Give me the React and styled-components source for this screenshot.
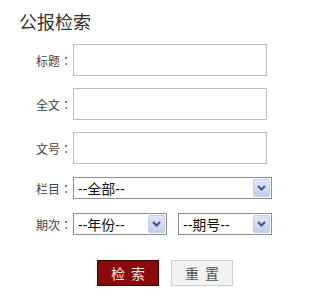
import React from "react";
import styled, { createGlobalStyle } from "styled-components";

const GlobalStyle = createGlobalStyle`
  body {
    margin: 0;
    background: #fff;
    font-family: "Liberation Sans", "Noto Sans CJK SC", sans-serif;
  }
`;

const Page = styled.div`
  width: 313px;
  height: 304px;
  padding: 12px 0 0 19px;
  box-sizing: border-box;
`;

const Title = styled.h2`
  margin: 0 0 10px 0;
  font-size: 18px;
  font-weight: normal;
  line-height: 22px;
  color: #333;
`;

const Form = styled.div`
  display: flex;
  flex-direction: column;
`;

const Row = styled.div`
  display: flex;
  align-items: center;
  margin-bottom: ${(props) => props.gap || 12}px;
`;

const Label = styled.span`
  width: 53px;
  text-align: right;
  font-size: 12px;
  font-family: "Liberation Sans", "Noto Sans CJK JP", sans-serif;
  color: #444;
  margin-right: 1px;
  white-space: nowrap;
`;

const TextBox = styled.div`
  width: 194px;
  height: 32px;
  box-sizing: border-box;
  border: 1px solid #bdbdbd;
  background: #fff;
`;

const Select = styled.div`
  width: ${(props) => props.width}px;
  height: 22px;
  box-sizing: border-box;
  border: 1px solid #8f8f8f;
  display: flex;
  align-items: center;
  justify-content: space-between;
  padding: 0 1px 0 4px;
  background: #fff;
  margin-right: ${(props) => props.mr || 0}px;
`;

const SelectText = styled.span`
  font-size: 14px;
  color: #111;
`;

const Arrow = styled.span`
  width: 17px;
  height: 18px;
  box-sizing: border-box;
  border: 1px solid #c3d0ea;
  border-radius: 2px;
  background: linear-gradient(#dfe7f8, #c2d0ef);
  display: flex;
  align-items: center;
  justify-content: center;
`;

const Buttons = styled.div`
  display: flex;
  gap: 12px;
  margin: 13px 0 0 78px;
`;

const Button = styled.div`
  width: 62px;
  height: 26px;
  box-sizing: border-box;
  display: flex;
  align-items: center;
  justify-content: center;
  font-size: 14px;
  letter-spacing: 6px;
  padding-left: 6px;
  color: ${(props) => (props.primary ? "#fde8e8" : "#555")};
  background: ${(props) => (props.primary ? "#8a0a0c" : "#f2f2f2")};
  border: 1px solid ${(props) => (props.primary ? "#3b0000" : "#cfcfcf")};
`;

function Chevron() {
  return (
    <svg width="9" height="6" viewBox="0 0 9 6">
      <path d="M1 1 L4.5 4.5 L8 1" fill="none" stroke="#46547c" strokeWidth="2" />
    </svg>
  );
}

function DropDown({ text, width, mr }) {
  return (
    <Select width={width} mr={mr}>
      <SelectText>{text}</SelectText>
      <Arrow>
        <Chevron />
      </Arrow>
    </Select>
  );
}

export default function App() {
  return (
    <Page>
      <GlobalStyle />
      <Title>公报检索</Title>
      <Form>
        <Row>
          <Label>标题：</Label>
          <TextBox />
        </Row>
        <Row>
          <Label>全文：</Label>
          <TextBox />
        </Row>
        <Row gap={13}>
          <Label>文号：</Label>
          <TextBox />
        </Row>
        <Row gap={14}>
          <Label>栏目：</Label>
          <DropDown text="--全部--" width={199} />
        </Row>
        <Row gap={0}>
          <Label>期次：</Label>
          <DropDown text="--年份--" width={94} mr={11} />
          <DropDown text="--期号--" width={94} />
        </Row>
        <Buttons>
          <Button primary>检索</Button>
          <Button>重置</Button>
        </Buttons>
      </Form>
    </Page>
  );
}
